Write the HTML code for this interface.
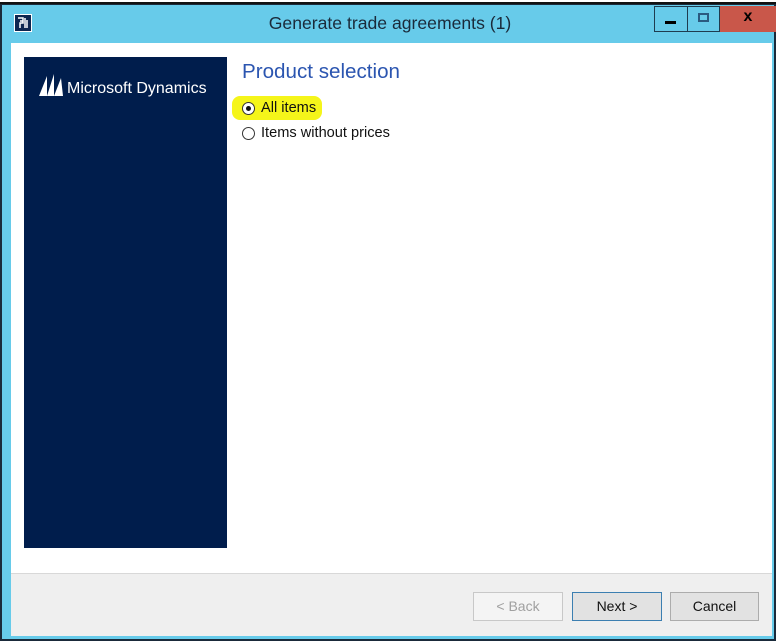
<!DOCTYPE html>
<html><head><meta charset="utf-8"><style>
*{margin:0;padding:0;box-sizing:border-box}
body{width:776px;height:641px;background:#fff;position:relative;overflow:hidden;font-family:"Liberation Sans",sans-serif}
.abs{position:absolute}
</style></head><body>
<div class="abs" style="left:0;top:2px;width:776px;height:2px;background:#111"></div>
<div class="abs" style="left:0;top:4px;width:776px;height:637px;background:#1a2a3a"></div>
<div class="abs" style="left:2px;top:5px;width:772px;height:634px;background:#67cbea"></div>
<!-- app icon -->
<div class="abs" style="left:14px;top:14px;width:18px;height:18px;background:#0d2650;border:1px solid #fff"></div>
<svg class="abs" style="left:15px;top:15px" width="16" height="16" viewBox="0 0 16 16"><path d="M3 3h5v5H5v5M5 6h3M10 3v10M12 5v8" stroke="#fff" stroke-width="1.5" fill="none"/></svg>
<div class="abs" style="left:225px;top:13px;width:330px;text-align:center;font-size:17.6px;color:#1a2a3a">Generate trade agreements (1)</div>
<!-- window buttons -->
<div class="abs" style="left:654px;top:6px;width:34px;height:26px;border:1px solid #1e3c50;background:#67cbea"></div>
<div class="abs" style="left:665px;top:21px;width:11px;height:3px;background:#000"></div>
<div class="abs" style="left:687px;top:6px;width:33px;height:26px;border:1px solid #1e3c50;background:#67cbea"></div>
<div class="abs" style="left:698px;top:13px;width:11px;height:9px;border:2px solid #2a5a80"></div>
<div class="abs" style="left:720px;top:6px;width:56px;height:26px;background:#c9574a"></div>
<div class="abs" style="left:720px;top:8px;width:56px;text-align:center;font-size:16px;font-weight:bold;color:#000">x</div>
<!-- content -->
<div class="abs" style="left:11px;top:43px;width:761px;height:531px;background:#fff"></div>
<div class="abs" style="left:11px;top:573px;width:761px;height:1px;background:#d8d8d8"></div>
<div class="abs" style="left:11px;top:574px;width:761px;height:62px;background:#efefef"></div>
<!-- left panel -->
<div class="abs" style="left:24px;top:57px;width:203px;height:491px;background:#001d4c"></div>
<svg class="abs" style="left:38px;top:71px" width="28" height="26" viewBox="0 0 28 26"><path d="M1 25L9 5 9 25zM9 25L16 3 16 25zM16 25L23 7 25 25z" fill="#fff"/></svg>
<div class="abs" style="left:67px;top:80px;font-size:16px;color:#fff">Microsoft Dynamics</div>
<!-- right -->
<div class="abs" style="left:242px;top:60px;font-size:20.6px;color:#2b55b0">Product selection</div>
<div class="abs" style="left:232px;top:96px;width:90px;height:24px;background:#f5f51a;border-radius:8px"></div>
<div class="abs" style="left:242px;top:102px;width:13px;height:13px;border:1px solid #333;border-radius:50%;background:#fff"></div>
<div class="abs" style="left:246px;top:106px;width:5px;height:5px;border-radius:50%;background:#111"></div>
<div class="abs" style="left:261px;top:100px;font-size:14.6px;color:#111">All items</div>
<div class="abs" style="left:242px;top:127px;width:13px;height:13px;border:1px solid #333;border-radius:50%;background:#fff"></div>
<div class="abs" style="left:261px;top:125px;font-size:14.6px;color:#111">Items without prices</div>
<!-- buttons -->
<div class="abs" style="left:473px;top:592px;width:90px;height:29px;border:1px solid #c8c8c8;background:#f4f4f4;color:#a0a0a0;font-size:14px;text-align:center;line-height:27px">&lt; Back</div>
<div class="abs" style="left:572px;top:592px;width:90px;height:29px;border:1px solid #3c7fb1;background:#e2e2e2;color:#111;font-size:14px;text-align:center;line-height:27px">Next &gt;</div>
<div class="abs" style="left:670px;top:592px;width:89px;height:29px;border:1px solid #acacac;background:#e2e2e2;color:#111;font-size:14px;text-align:center;line-height:27px">Cancel</div>
</body></html>
